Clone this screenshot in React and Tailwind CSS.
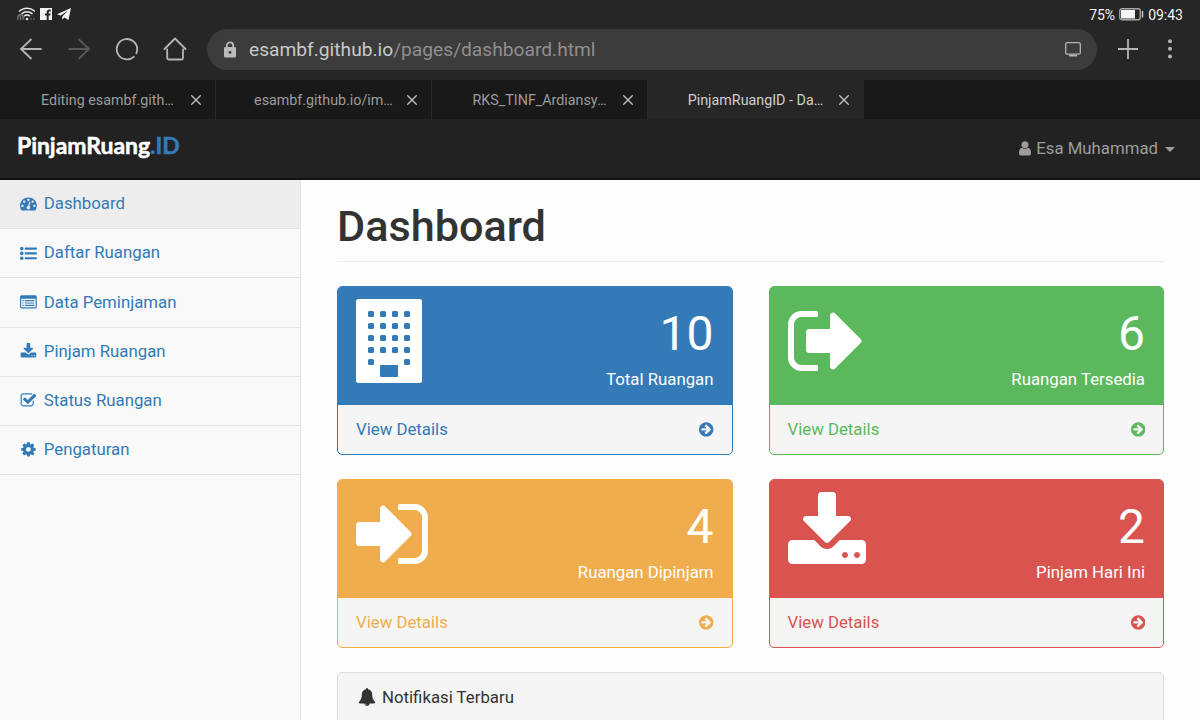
import React from "react";

const P = {
  dashboard:
    "M384 1152q0-53-37.5-90.5t-90.5-37.5-90.5 37.5-37.5 90.5 37.5 90.5 90.5 37.5 90.5-37.5 37.5-90.5zm192-448q0-53-37.5-90.5t-90.5-37.5-90.5 37.5-37.5 90.5 37.5 90.5 90.5 37.5 90.5-37.5 37.5-90.5zm428 481l101-382q6-26-7.5-48.5t-38.5-29.5-48 6.5-30 39.5l-101 382q-60 5-107 43.5t-63 98.5q-20 77 20 146t117 89 146-20 89-117q16-60-6-117t-72-91zm660-33q0-53-37.5-90.5t-90.5-37.5-90.5 37.5-37.5 90.5 37.5 90.5 90.5 37.5 90.5-37.5 37.5-90.5zm-640-640q0-53-37.5-90.5t-90.5-37.5-90.5 37.5-37.5 90.5 37.5 90.5 90.5 37.5 90.5-37.5 37.5-90.5zm448 192q0-53-37.5-90.5t-90.5-37.5-90.5 37.5-37.5 90.5 37.5 90.5 90.5 37.5 90.5-37.5 37.5-90.5zm320 448q0 261-141 483-19 29-54 29h-1402q-35 0-54-29-141-221-141-483 0-182 71-348t191-286 286-191 348-71 348 71 286 191 191 286 71 348z",
  list:
    "M0 384a192 192 0 1 0 384 0a192 192 0 1 0-384 0zM0 896a192 192 0 1 0 384 0a192 192 0 1 0-384 0zM0 1408a192 192 0 1 0 384 0a192 192 0 1 0-384 0zM512 272h1280v224h-1280zM512 784h1280v224h-1280zM512 1296h1280v224h-1280z",
  table:
    "M160 128h1472q66 0 113 47t47 113v1088q0 66-47 113t-113 47h-1472q-66 0-113-47t-47-113v-1088q0-66 47-113t113-47zM128 512v864q0 32 32 32h1472q32 0 32-32v-864zM256 640h128v128h-128zM512 640h1024v128h-1024zM256 896h128v128h-128zM512 896h1024v128h-1024zM256 1152h128v128h-128zM512 1152h1024v128h-1024z",
  download:
    "M1344 1344q0-26-19-45t-45-19-45 19-19 45 19 45 45 19 45-19 19-45zm256 0q0-26-19-45t-45-19-45 19-19 45 19 45 45 19 45-19 19-45zm128-224v320q0 40-28 68t-68 28h-1472q-40 0-68-28t-28-68v-320q0-40 28-68t68-28h465l135 136q58 56 136 56t136-56l136-136h464q40 0 68 28t28 68zm-325-569q17 41-14 70l-448 448q-18 19-45 19t-45-19l-448-448q-31-29-14-70 17-39 59-39h256v-448q0-26 19-45t45-19h256q26 0 45 19t19 45v448h256q42 0 59 39z",
  check:
    "M1472 930v318q0 119-84.5 203.5t-203.5 84.5h-832q-119 0-203.5-84.5t-84.5-203.5v-832q0-119 84.5-203.5t203.5-84.5h832q63 0 117 25 15 7 18 23 3 17-9 29l-49 49q-10 10-23 10-3 0-9-2-23-6-45-6h-832q-66 0-113 47t-47 113v832q0 66 47 113t113 47h832q66 0 113-47t47-113v-254q0-13 9-22l64-64q10-10 23-10 6 0 12 3 20 8 20 29zm231-489l-814 814q-24 24-57 24t-57-24l-430-430q-24-24-24-57t24-57l110-110q24-24 57-24t57 24l263 263 647-647q24-24 57-24t57 24l110 110q24 24 24 57t-24 57z",
  gear:
    "M1152 896q0-106-75-181t-181-75-181 75-75 181 75 181 181 75 181-75 75-181zm512-109v222q0 12-8 23t-20 13l-185 28q-19 54-39 91 35 50 107 138 10 12 10 25t-9 23q-27 37-99 108t-94 71q-12 0-26-9l-138-108q-44 23-91 38-16 136-29 186-7 28-36 28h-222q-14 0-24.5-8.5t-11.5-21.5l-28-184q-49-16-90-37l-141 107q-10 9-25 9-14 0-25-11-126-114-165-168-7-10-7-23 0-12 8-23 15-21 51-66.5t54-70.5q-27-50-41-99l-183-27q-13-2-21-12.5t-8-23.5v-222q0-12 8-23t19-13l186-28q14-46 39-92-40-57-107-138-10-12-10-24 0-10 9-23 26-36 98.5-107.5t94.5-71.5q13 0 26 10l138 107q44-23 91-38 16-136 29-186 7-28 36-28h222q14 0 24.5 8.5t11.5 21.5l28 184q49 16 90 37l142-107q9-9 24-9 13 0 25 10 129 119 165 170 7 8 7 22 0 12-8 23-15 21-51 66.5t-54 70.5q26 50 41 98l183 28q13 2 21 12.5t8 23.5z",
  arrowCircle:
    "M1413 896q0-27-18-45l-91-91-362-362q-18-18-45-18t-45 18l-91 91q-18 18-18 45t18 45l189 189h-502q-26 0-45 19t-19 45v128q0 26 19 45t45 19h502l-189 189q-18 18-18 45t18 45l91 91q18 18 45 18t45-18l362-362 91-91q18-18 18-45zm251 0q0 209-103 385.5t-279.5 279.5-385.5 103-385.5-103-279.5-279.5-103-385.5 103-385.5 279.5-279.5 385.5-103 385.5 103 279.5 279.5 103 385.5z",
  user:
    "M1536 1405q0 120-73 189.5t-194 69.5h-746q-121 0-194-69.5t-73-189.5q0-53 3.5-103.5t14-109 26.5-108.5 43-97.5 62-81 85.5-53.5 111.5-20q9 0 42 21.5t74.5 48 108 48 69.5 21.5 69.5-21.5 108-48 74.5-48 42-21.5q61 0 111.5 20t85.5 53.5 62 81 43 97.5 26.5 108.5 14 109 3.5 103.5zm-256-893q0 159-112.5 271.5t-271.5 112.5-271.5-112.5-112.5-271.5 112.5-271.5 271.5-112.5 271.5 112.5 112.5 271.5z",
  bell:
    "M912 1696q0-16-16-16-59 0-101.5-42.5t-42.5-101.5q0-16-16-16t-16 16q0 73 51.5 124.5t124.5 51.5q16 0 16-16zm816-288q0 52-38 90t-90 38h-448q0 106-75 181t-181 75-181-75-75-181h-448q-52 0-90-38t-38-90q50-42 91-88t85-119.5 74.5-158.5 50-206 19.5-260q0-152 117-282.5t307-158.5q-8-19-8-39 0-40 28-68t68-28 68 28 28 68q0 20-8 39 190 28 307 158.5t117 282.5q0 139 19.5 260t50 206 74.5 158.5 85 119.5 91 88z",
  signOut:
    "M704 1440q0 4 1 20t.5 26.5-3 23.5-10 19.5-20.5 6.5h-320q-119 0-203.5-84.5t-84.5-203.5v-704q0-119 84.5-203.5t203.5-84.5h320q13 0 22.5 9.5t9.5 22.5q0 4 1 20t.5 26.5-3 23.5-10 19.5-20.5 6.5h-320q-66 0-113 47t-47 113v704q0 66 47 113t113 47h312l11.5 1 11.5 3 8 5.5 7 9 2 13.5zm928-544q0 26-19 45l-544 544q-19 19-45 19t-45-19-19-45v-288h-448q-26 0-45-19t-19-45v-384q0-26 19-45t45-19h448v-288q0-26 19-45t45-19 45 19l544 544q19 19 19 45z",
  signIn:
    "M1312 896q0 26-19 45l-544 544q-19 19-45 19t-45-19-19-45v-288h-448q-26 0-45-19t-19-45v-384q0-26 19-45t45-19h448v-288q0-26 19-45t45-19 45 19l544 544q19 19 19 45zm352-352v704q0 119-84.5 203.5t-203.5 84.5h-320q-13 0-22.5-9.5t-9.5-22.5q0-4-1-20t-.5-26.5 3-23.5 10-19.5 20.5-6.5h320q66 0 113-47t47-113v-704q0-66-47-113t-113-47h-312l-11.5-1-11.5-3-8-5.5-7-9-2-13.5q0-4-1-20t-.5-26.5 3-23.5 10-19.5 20.5-6.5h320q119 0 203.5 84.5t84.5 203.5z",
};

function Icon({ name, className = "", box = "0 0 1792 1792", rule = "nonzero" }) {
  return (
    <svg viewBox={box} className={"shrink-0 fill-current " + className}>
      <path d={P[name]} fillRule={rule} />
    </svg>
  );
}

function Building() {
  const windows = [];
  for (let r = 0; r < 5; r++)
    for (let c = 0; c < 4; c++)
      if (r < 4 || c === 0 || c === 3)
        windows.push(<rect key={r + "-" + c} x={12 + c * 12} y={12 + r * 12} width="6" height="6" rx="1.5" />);
  return (
    <svg viewBox="0 0 66 84" className="h-[84px] w-[66px] shrink-0">
      <rect width="66" height="84" rx="2.5" fill="#fff" />
      <g fill="#337ab7">
        {windows}
        <rect x="24" y="66" width="18" height="12" rx="1" />
      </g>
    </svg>
  );
}

function StatusBar() {
  return (
    <div className="flex h-[29px] items-center justify-between pl-[17px] pr-[17px] text-[14px] text-[#f2f2f2]">
      <div className="flex items-center gap-[5px] pb-[1px]">
        <svg viewBox="0 0 18 14" className="h-[14px] w-[18px]" fill="none" stroke="#e8e8e8" strokeWidth="1.5">
          <path d="M2 4.6C6.500 0 13.500 0 18 4.600M4.500 7C7.500 4 12.500 4 15.500 7M7 9.300C8.800 7.600 11.200 7.600 13 9.300" />
          <circle cx="10" cy="12" r="1.300" fill="#e8e8e8" stroke="none" />
          <path d="M.8 12.800V10.500a2.800 2.800 0 0 1 5.600 0v2.300M3.600 9v4" stroke="#777" />
          <path d="M13.500 12h1.500M16 12h1.500" stroke="#666" />
        </svg>
        <svg viewBox="0 0 12 12" className="h-[12px] w-[12px]">
          <path
            fill="#f2f2f2"
            fillRule="evenodd"
            d="M0 0h12v12H8.700V7.500h1.600l.3-1.900H8.700V4.400c0-.6.200-1 1-1h1V1.700C10.400 1.600 9.900 1.600 9.300 1.600c-1.600 0-2.600.9-2.600 2.600v1.400H5v1.900h1.700V12H0z"
          />
        </svg>
        <svg viewBox="0 0 14 12" className="h-[12px] w-[14px]">
          <path fill="#f2f2f2" d="M14 0L0 6.200l3.700 1.400L11 2.600 5.300 8.400v3.300l2.100-2.100L11.500 12z" />
        </svg>
      </div>
      <div className="flex items-center pt-[1px]">
        <span className="w-[26px]">75%</span>
        <svg viewBox="0 0 25 13" className="mb-[1px] ml-[4px] mr-[4px] h-[13px] w-[25px]">
          <rect x=".75" y=".75" width="20.500" height="11" rx="2" fill="none" stroke="#a8a8a8" strokeWidth="1.300" />
          <rect x="2" y="2" width="14" height="8.500" fill="#f4f4f4" />
          <rect x="22.800" y="3" width="1.400" height="6.500" fill="#ccc" />
        </svg>
        <span>09:43</span>
      </div>
    </div>
  );
}

function Toolbar() {
  return (
    <div className="flex h-[51px] items-start pr-[20px]">
      <div className="flex h-[40px] w-[207px] shrink-0 items-center pl-[19px]">
        <svg viewBox="0 0 24 24" className="h-[24px] w-[24px]" fill="none" stroke="#b5b5b5" strokeWidth="1.800">
          <path d="M22.500 12H2M12.500 2L2 12l10.500 10" />
        </svg>
        <svg viewBox="0 0 24 24" className="ml-[24px] h-[24px] w-[24px]" fill="none" stroke="#585858" strokeWidth="1.800">
          <path d="M1.500 12H22M11.500 2L22 12L11.500 22" />
        </svg>
        <svg viewBox="0 0 24 24" className="ml-[24px] h-[24px] w-[24px]" fill="none" stroke="#b5b5b5" strokeWidth="1.800" strokeLinecap="round">
          <path d="M18.800 19.800A10.200 10.200 0 1 1 22.100 13.500L21.400 16.300" />
        </svg>
        <svg viewBox="0 0 24 24" className="ml-[24px] h-[24px] w-[24px]" fill="none" stroke="#b5b5b5" strokeWidth="1.800" strokeLinejoin="round" strokeLinecap="round">
          <path d="M1.500 12L12 1.500 22.500 12M4.200 12.500V21q0 1.500 1.500 1.500H18.500q1.500 0 1.500-1.500V12.500" />
        </svg>
      </div>
      <div className="flex h-[41px] w-[890px] shrink-0 items-center rounded-full bg-[#3c3c3c] pl-[17px] pr-[16px]">
        <svg viewBox="0 0 12 17" className="h-[17px] w-[12px]">
          <path d="M2.800 7V4.500a3.200 3.200 0 0 1 6.400 0V7" fill="none" stroke="#bbb" strokeWidth="1.700" />
          <path fill="#bbb" fillRule="evenodd" d="M1.300 6h9.400Q12 6 12 7.300v8Q12 16.500 10.700 16.500H1.300Q0 16.500 0 15.300v-8Q0 6 1.300 6zM6 9.700a1.500 1.500 0 1 0 0 3a1.500 1.500 0 1 0 0-3z" />
        </svg>
        <span className="ml-[13px] pt-[2px] text-[19.2px] text-[#8f8f8f]">
          <span className="text-[#c9c9c9]">esambf.github.io</span>/pages/dashboard.html
        </span>
        <svg viewBox="0 0 16 15" className="ml-auto h-[15px] w-[16px]" fill="none" stroke="#b5b5b5">
          <rect x=".7" y=".7" width="14.600" height="11.500" rx="1.500" strokeWidth="1.300" />
          <path d="M4 13.700h8" strokeWidth="1.600" />
        </svg>
      </div>
      <div className="flex h-[40px] flex-1 items-center justify-between pl-[21px]">
        <svg viewBox="0 0 20 20" className="h-[20px] w-[20px]" stroke="#b5b5b5" strokeWidth="1.800">
          <path d="M0 10h20M10 0v20" />
        </svg>
        <svg viewBox="0 0 20 20" className="h-[20px] w-[20px]" fill="#b5b5b5">
          <circle cx="10" cy="2.200" r="2" />
          <circle cx="10" cy="9.800" r="2" />
          <circle cx="10" cy="17.400" r="2" />
        </svg>
      </div>
    </div>
  );
}

const tabs = ["Editing esambf.gith…", "esambf.github.io/im…", "RKS_TINF_Ardiansy…", "PinjamRuangID - Da…"];

function Tabs() {
  return (
    <div className="flex h-[39px] bg-[#191919]">
      {tabs.map((t, i) => (
        <div
          key={t}
          className={
            "flex w-[216px] shrink-0 items-center pl-[37.5px] " +
            (i === 3 ? "bg-[#262626] text-[#cfcfcf]" : "border-r border-[#2a2a2a] text-[#9c9c9c]")
          }
        >
          <span className="w-[140px] whitespace-nowrap pt-[2px] text-center text-[14.3px]">{t}</span>
          <svg viewBox="0 0 10 10" className="ml-[13.5px] h-[10px] w-[10px]" stroke="#c4c4c4" strokeWidth="1.300">
            <path d="M.3.3l9.400 9.400M9.700.3L.3 9.700" />
          </svg>
        </div>
      ))}
    </div>
  );
}

function Navbar() {
  return (
    <div className="flex h-[61px] items-start justify-between border-b-2 border-[#111] bg-[#222] pl-[17px] pr-[25px]">
      <div className="mt-[12px] whitespace-nowrap font-['Lato',sans-serif] text-[23px] font-bold leading-[28px] tracking-[-0.05px] text-white [-webkit-text-stroke:0.5px_currentColor]">
        PinjamRuang<span className="text-[#337ab7]">.ID</span>
      </div>
      <div className="mt-[17px] flex items-center text-[16.8px] leading-[24px] text-[#9d9d9d]">
        <Icon name="user" box="256 0 1280 1792" className="h-[16.8px] w-[12px]" />
        <span className="ml-[5px]">Esa Muhammad</span>
        <svg viewBox="0 0 10 5" className="ml-[7px] mt-[3px] h-[5px] w-[10px] fill-current">
          <path d="M0 0h10L5 5z" />
        </svg>
      </div>
    </div>
  );
}

const menu = [
  ["dashboard", "Dashboard"],
  ["list", "Daftar Ruangan"],
  ["table", "Data Peminjaman"],
  ["download", "Pinjam Ruangan"],
  ["check", "Status Ruangan"],
  ["gear", "Pengaturan"],
];

function Sidebar() {
  return (
    <div className="w-[301px] shrink-0 border-r border-[#e3e3e3] bg-[#f9f9f9] text-[#337ab7]">
      {menu.map(([icon, label], i) => (
        <div
          key={label}
          className={"flex h-[49.2px] items-center border-b border-[#e3e3e3] pb-[0.5px] pl-[20px] " + (i === 0 ? "bg-[#ededed]" : "")}
        >
          <Icon name={icon} rule={icon === "table" ? "evenodd" : "nonzero"} className="h-[16.8px] w-[16.8px]" />
          <span className="ml-[7px] text-[16.8px]">{label}</span>
        </div>
      ))}
    </div>
  );
}

const cards = [
  { n: "10", label: "Total Ruangan", bg: "bg-[#337ab7]", border: "border-[#337ab7]", text: "text-[#337ab7]", icon: <Building /> },
  {
    n: "6", label: "Ruangan Tersedia", bg: "bg-[#5cb85c]", border: "border-[#5cb85c]", text: "text-[#5cb85c]",
    icon: <Icon name="signOut" box="64 0 1600 1792" className="h-[84px] w-[75px]" />,
  },
  {
    n: "4", label: "Ruangan Dipinjam", bg: "bg-[#f0ad4e]", border: "border-[#f0ad4e]", text: "text-[#f0ad4e]",
    icon: <Icon name="signIn" box="128 0 1600 1792" className="h-[84px] w-[75px]" />,
  },
  {
    n: "2", label: "Pinjam Hari Ini", bg: "bg-[#d9534f]", border: "border-[#d9534f]", text: "text-[#d9534f]",
    icon: <Icon name="download" box="64 0 1664 1792" className="h-[84px] w-[78px]" />,
  },
];

function Card({ n, label, bg, border, text, icon }) {
  return (
    <div className={"flex h-[169px] flex-col overflow-hidden rounded-[5px] border bg-[#f5f5f5] " + border}>
      <div className={"flex h-[118px] justify-between pl-[18px] pr-[18px] pt-[12px] text-white " + bg}>
        {icon}
        <div className="text-right">
          <div className="mt-[7px] text-[48px] leading-[56px]">{n}</div>
          <div className="mt-[5px] text-[16.8px] leading-[24px]">{label}</div>
        </div>
      </div>
      <div className={"flex flex-1 items-center justify-between pl-[18px] pr-[18px] text-[16.8px] " + text}>
        <span>View Details</span>
        <Icon name="arrowCircle" box="128 0 1536 1792" className="h-[16.8px] w-[14.4px]" />
      </div>
    </div>
  );
}

export default function App() {
  return (
    <div className="flex h-[720px] w-[1200px] flex-col overflow-hidden bg-[#262626] font-['Roboto',sans-serif]">
      <StatusBar />
      <Toolbar />
      <Tabs />
      <Navbar />
      <div className="flex min-h-0 flex-1 bg-[#fdfdfd]">
        <Sidebar />
        <div className="flex-1 pl-[36px] pr-[36px] text-[#333]">
          <h1 className="h-[82px] border-b border-[#eee] pt-[22px] text-[43.2px] font-medium leading-[50px]">Dashboard</h1>
          <div className="mt-[24px] grid grid-cols-2 gap-x-[36px] gap-y-[24.4px]">
            {cards.map((c) => (
              <Card key={c.label} {...c} />
            ))}
          </div>
          <div className="mt-[24px] flex h-[80px] items-start rounded-t-[5px] border border-[#ddd] bg-[#f5f5f5] pl-[20px] pt-[12px] text-[16.8px] leading-[24px]">
            <Icon name="bell" className="mt-[3px] h-[18px] w-[18px]" />
            <span className="ml-[6px]">Notifikasi Terbaru</span>
          </div>
        </div>
      </div>
    </div>
  );
}
